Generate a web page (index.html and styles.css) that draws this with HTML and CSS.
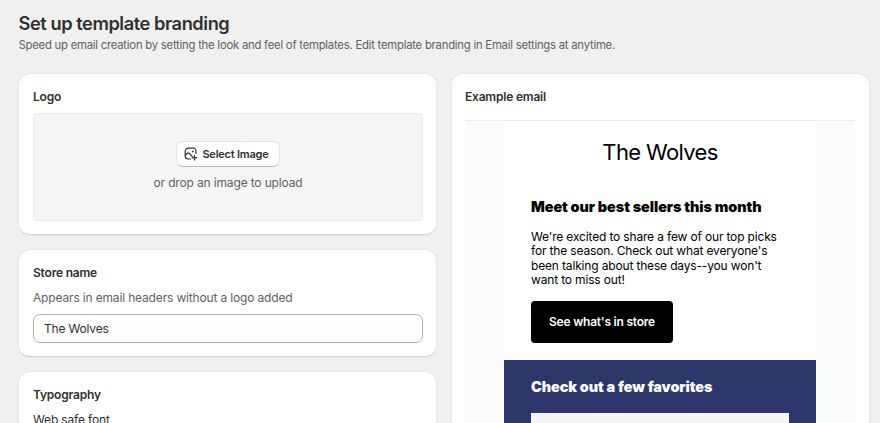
FILE: index.html
```html
<!DOCTYPE html>
<html lang="en">
<head>
  <meta charset="UTF-8">
  <meta name="viewport" content="width=device-width, initial-scale=1.0">
  <title>Set up template branding</title>
  <link rel="stylesheet" href="styles.css">
</head>
<body>
  <header class="page-header">
    <h1>Set up template branding</h1>
    <p>Speed up email creation by setting the look and feel of templates. Edit template branding in Email settings at anytime.</p>
  </header>

  <main class="layout">
    <div class="settings">
      <!-- Logo upload -->
      <section class="card logo-card">
        <h2>Logo</h2>
        <div class="dropzone">
          <button type="button" class="select-image">
            <svg class="icon" viewBox="0 0 14 14" fill="none" stroke="currentColor" stroke-width="1.2" stroke-linecap="round" stroke-linejoin="round">
              <path d="M12 6.4V4.2A3 3 0 0 0 9 1.2H4.2A3 3 0 0 0 1.2 4.2V9A3 3 0 0 0 4.2 12H6.6"/>
              <path d="M1.5 8.1L3.4 6.3a1.1 1.1 0 0 1 1.5 0L8.2 9.4"/>
              <path d="M10.5 8.3v4.6M8.2 10.6h4.6"/>
              <circle cx="8.9" cy="4.5" r="0.9" fill="currentColor" stroke="none"/>
            </svg>
            <span>Select Image</span>
          </button>
          <p>or drop an image to upload</p>
        </div>
      </section>

      <!-- Store name -->
      <section class="card store-card">
        <h2>Store name</h2>
        <label for="storeName">Appears in email headers without a logo added</label>
        <input type="text" id="storeName" name="storeName" value="The Wolves">
      </section>

      <!-- Typography -->
      <section class="card typography-card">
        <h2>Typography</h2>
        <p>Web safe font</p>
      </section>
    </div>

    <!-- Email preview -->
    <section class="card preview-card">
      <h2>Example email</h2>
      <div class="preview">
        <div class="email">
          <div class="email-store">The Wolves</div>
          <div class="email-intro">
            <h3>Meet our best sellers this month</h3>
            <p>We're excited to share a few of our top picks<br>for the season. Check out what everyone's<br>been talking about these days--you won't<br>want to miss out!</p>
            <a class="email-button">See what's in store</a>
          </div>
          <div class="email-products">
            <h3>Check out a few favorites</h3>
            <div class="product"></div>
          </div>
        </div>
      </div>
    </section>
  </main>
</body>
</html>
```
FILE: styles.css
```css
* {
  box-sizing: border-box;
}

body {
  font-family: Inter, sans-serif;
  background-color: #f0f0f0;
  color: #303030;
  margin: 0;
  padding: 11px 10px 0 18px;
  height: 423px;
  overflow: hidden;
  white-space: nowrap;
}

h1, h2, h3, p {
  margin: 0;
}

.page-header {
  height: 62px;
  padding-left: 0.5px;
}

.page-header h1 {
  font-size: 18.3px;
  line-height: 24px;
  font-weight: 600;
  letter-spacing: -0.46px;
}

.page-header p {
  margin-top: 2px;
  font-size: 11.3px;
  line-height: 16px;
  letter-spacing: -0.23px;
  color: #616161;
}

.layout {
  display: grid;
  grid-template-columns: 1fr 1fr;
  gap: 14px;
}

.settings {
  display: flex;
  flex-direction: column;
  gap: 14px;
}

.card {
  background: #fff;
  border-radius: 12px;
  padding: 14px 13px 14px 14px;
  border: 1px solid #e7e7e7;
  border-bottom-color: #d2d2d2;
  box-shadow: 0 1px 1px rgba(0, 0, 0, 0.04);
  font-size: 12px;
  line-height: 18px;
  letter-spacing: -0.16px;
}

.card h2 {
  font-size: 12px;
  font-weight: 600;
  letter-spacing: -0.2px;
}

.logo-card {
  height: 162px;
}

.dropzone {
  display: flex;
  flex-direction: column;
  align-items: center;
  height: 108px;
  margin-top: 7px;
  padding-top: 27px;
  background: #f6f6f6;
  border: 1px solid #ececec;
  border-radius: 3px;
}

.dropzone p {
  margin-top: 7px;
  letter-spacing: -0.15px;
  color: #616161;
}

.select-image {
  display: flex;
  align-items: center;
  gap: 4px;
  height: 26px;
  padding: 0 10px 1px 7px;
  font-family: inherit;
  font-size: 11px;
  font-weight: 600;
  letter-spacing: -0.22px;
  color: #303030;
  background: #fff;
  border: 1px solid #e3e3e3;
  border-bottom-color: #bdbdbd;
  border-radius: 7px;
}

.icon {
  width: 14px;
  height: 14px;
}

.store-card {
  height: 108px;
}

.store-card label {
  display: block;
  margin-top: 7px;
  color: #616161;
}

.store-card input {
  display: block;
  width: 100%;
  height: 29px;
  margin-top: 7px;
  padding: 0 10px;
  font-family: inherit;
  font-size: 12px;
  letter-spacing: -0.18px;
  color: #303030;
  background: #fdfdfd;
  border: 1px solid #b0b0b0;
  border-radius: 7px;
}

.typography-card {
  height: 120px;
}

.typography-card p {
  margin-top: 7px;
}

.preview-card {
  height: 400px;
  padding: 14px 14px 14px 13px;
}

.preview {
  height: 340px;
  margin-top: 14px;
  padding: 0 39px;
  background: #fafcfb;
  border-top: 1px solid #ebebeb;
}

.email {
  height: 100%;
  background: #fff;
  color: #000;
}

.email-store {
  height: 58px;
  margin: 0 27px;
  padding-top: 17px;
  border-bottom: 1px solid #fcfcfc;
  font-size: 22px;
  line-height: 28px;
  letter-spacing: -0.65px;
  text-align: center;
}

.email h3 {
  font-size: 14.4px;
  line-height: 20px;
  font-weight: 900;
  letter-spacing: -0.05px;
}

.email-intro {
  height: 181px;
  padding: 18px 27px 0;
}

.email-intro p {
  margin-top: 13px;
  line-height: 14.3px;
}

.email-button {
  display: flex;
  align-items: center;
  justify-content: center;
  width: 142px;
  height: 42px;
  margin-top: 14px;
  background: #000;
  color: #fff;
  border-radius: 4px;
  font-weight: 600;
  letter-spacing: -0.22px;
}

.email-products {
  height: 101px;
  padding: 17px 27px 0;
  background: #2d366b;
  color: #fff;
}

.product {
  height: 60px;
  margin-top: 16px;
  background: #f5f5f5;
}
```
